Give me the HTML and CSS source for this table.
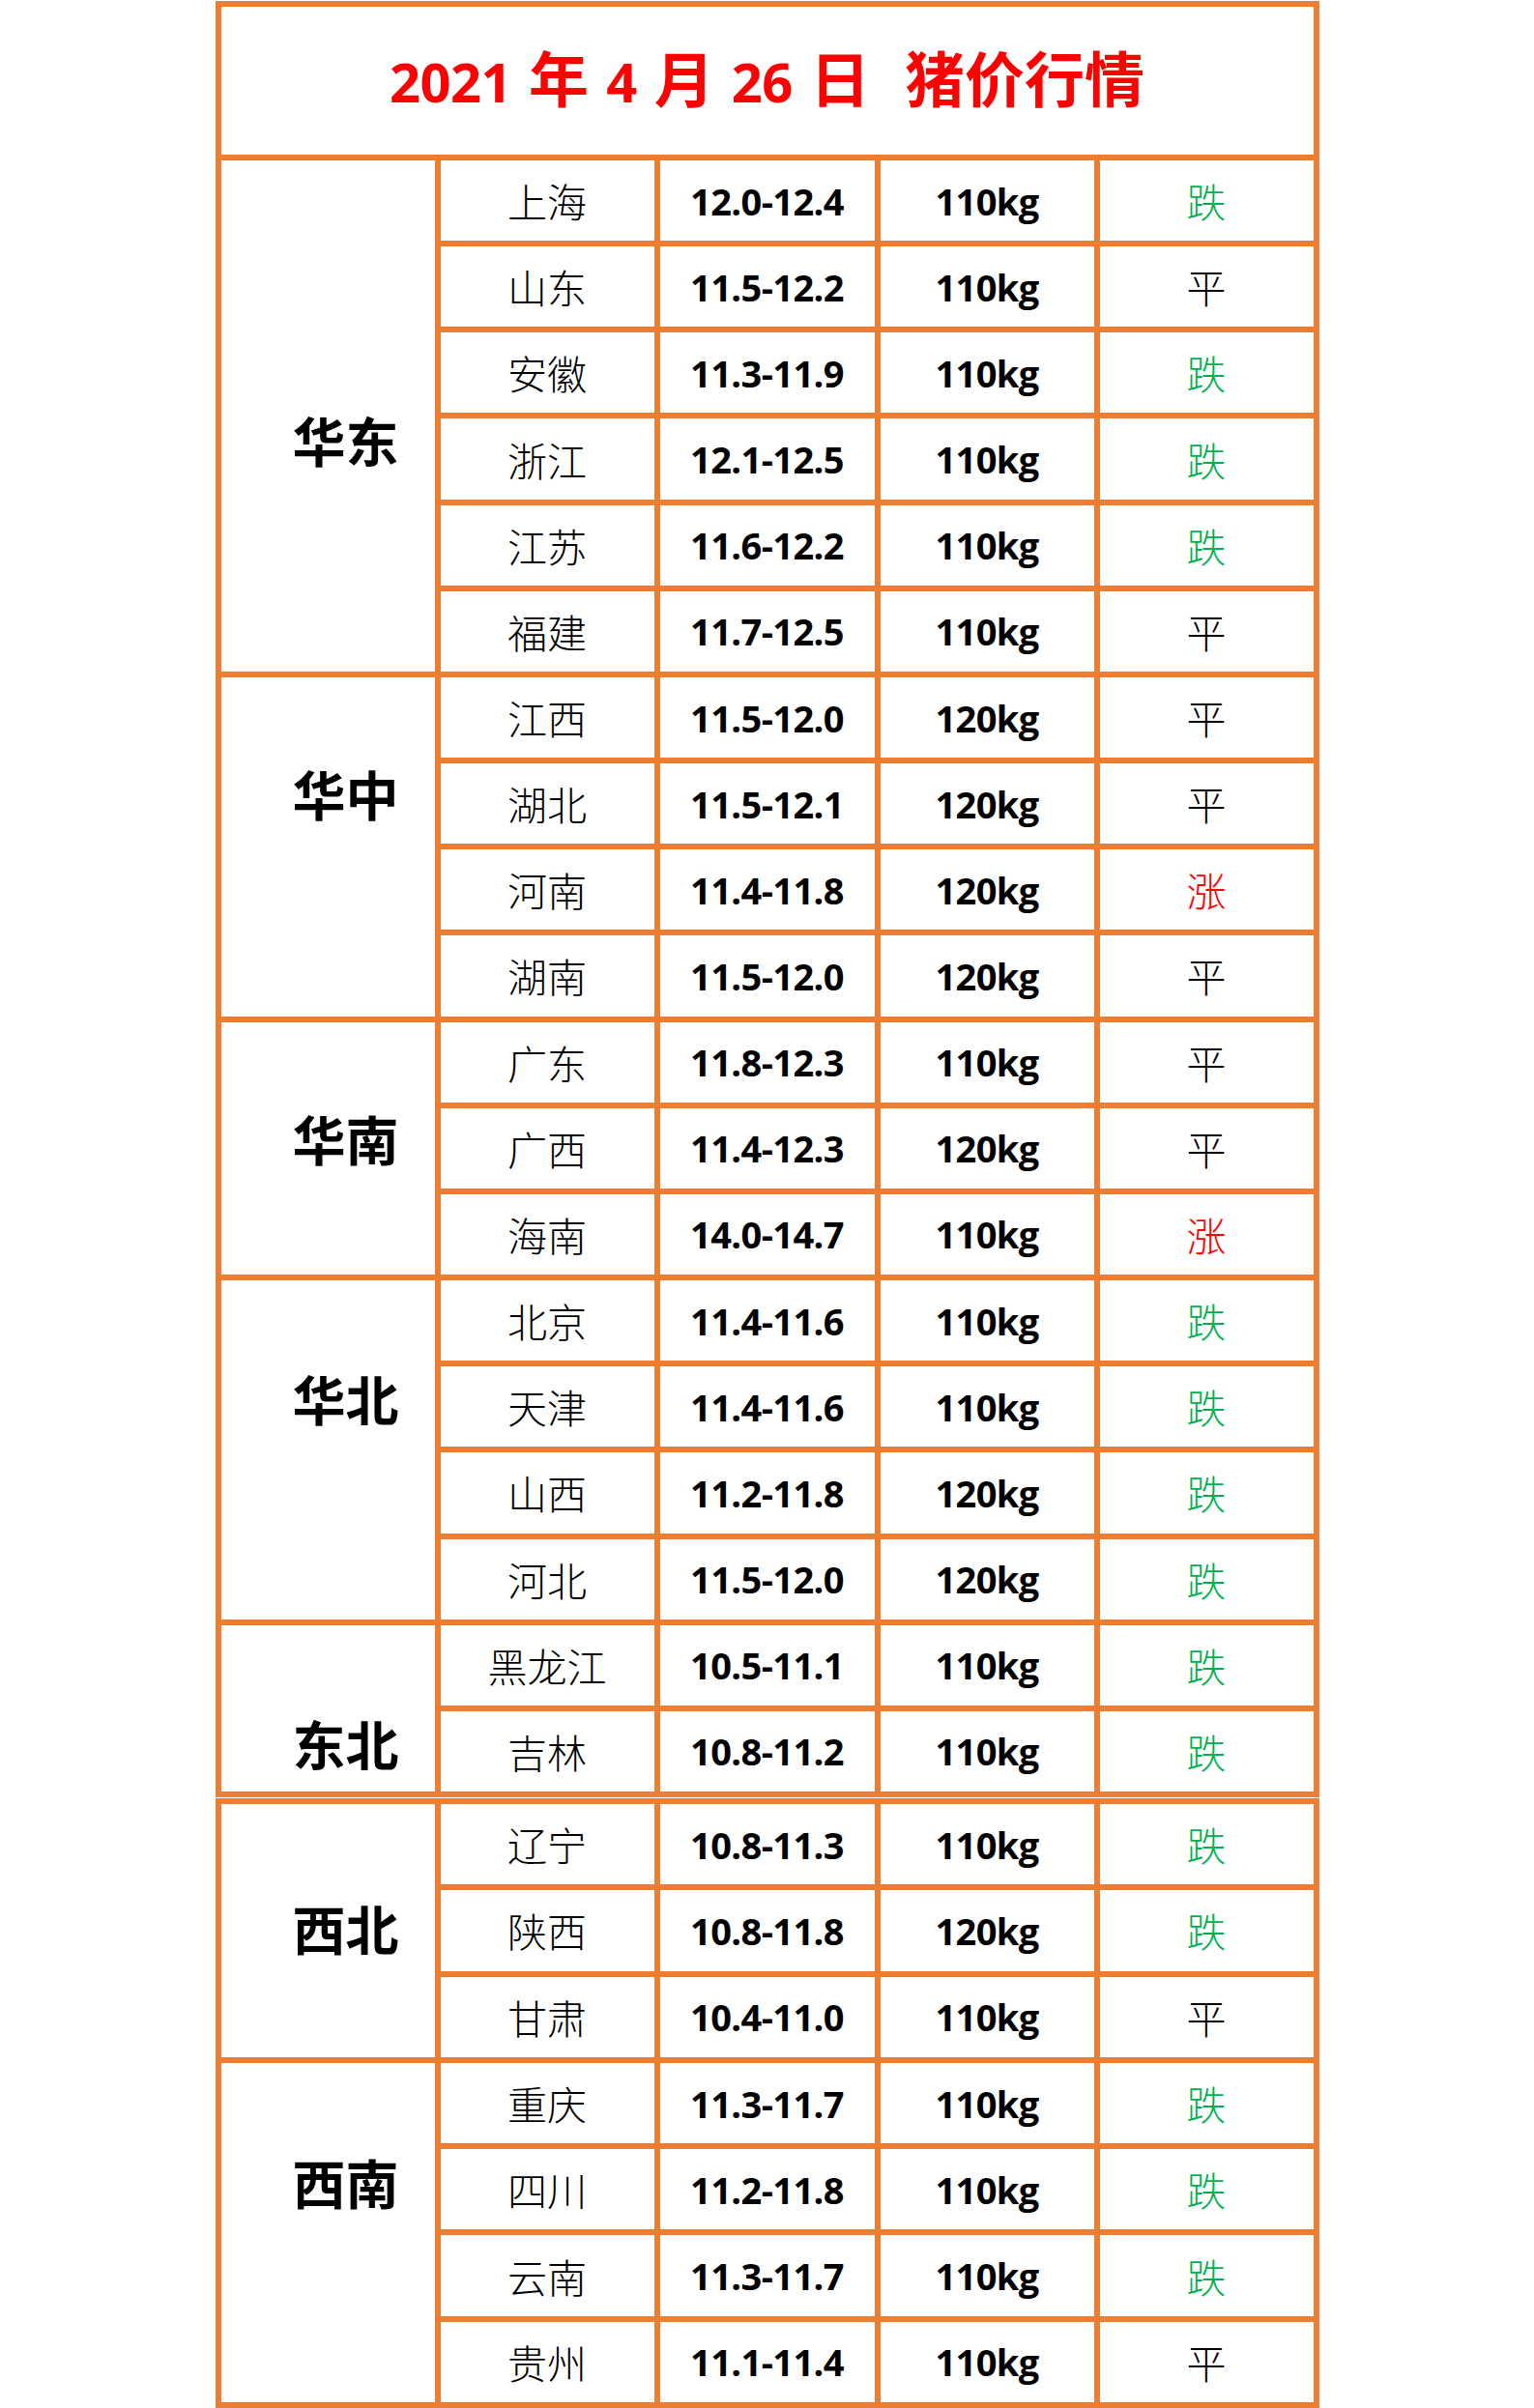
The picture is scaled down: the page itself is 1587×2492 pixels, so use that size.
FILE: index.html
```html
<!DOCTYPE html>
<html lang="zh-CN">
<head>
<meta charset="utf-8">
<title>2021年4月26日 猪价行情</title>
<link rel="stylesheet" href="styles.css">
</head>
<body>
<div class="sheet sheet-top">
  <div class="title"><span class="title-text"><span class="tnum">2021</span> 年 <span class="tnum">4</span> 月 <span class="tnum">26</span> 日&nbsp;&nbsp;猪价行情</span></div>

  <div class="region span-6 off-huadong"><span>华东</span></div>
  <div class="prov">上海</div><div class="price">12.0-12.4</div><div class="weight">110kg</div><div class="trend down">跌</div>
  <div class="prov">山东</div><div class="price">11.5-12.2</div><div class="weight">110kg</div><div class="trend flat">平</div>
  <div class="prov">安徽</div><div class="price">11.3-11.9</div><div class="weight">110kg</div><div class="trend down">跌</div>
  <div class="prov">浙江</div><div class="price">12.1-12.5</div><div class="weight">110kg</div><div class="trend down">跌</div>
  <div class="prov">江苏</div><div class="price">11.6-12.2</div><div class="weight">110kg</div><div class="trend down">跌</div>
  <div class="prov">福建</div><div class="price">11.7-12.5</div><div class="weight">110kg</div><div class="trend flat">平</div>

  <div class="region span-4 off-huazhong"><span>华中</span></div>
  <div class="prov">江西</div><div class="price">11.5-12.0</div><div class="weight">120kg</div><div class="trend flat">平</div>
  <div class="prov">湖北</div><div class="price">11.5-12.1</div><div class="weight">120kg</div><div class="trend flat">平</div>
  <div class="prov">河南</div><div class="price">11.4-11.8</div><div class="weight">120kg</div><div class="trend up">涨</div>
  <div class="prov">湖南</div><div class="price">11.5-12.0</div><div class="weight">120kg</div><div class="trend flat">平</div>

  <div class="region span-3 off-huanan"><span>华南</span></div>
  <div class="prov">广东</div><div class="price">11.8-12.3</div><div class="weight">110kg</div><div class="trend flat">平</div>
  <div class="prov">广西</div><div class="price">11.4-12.3</div><div class="weight">120kg</div><div class="trend flat">平</div>
  <div class="prov">海南</div><div class="price">14.0-14.7</div><div class="weight">110kg</div><div class="trend up">涨</div>

  <div class="region span-4 off-huabei"><span>华北</span></div>
  <div class="prov">北京</div><div class="price">11.4-11.6</div><div class="weight">110kg</div><div class="trend down">跌</div>
  <div class="prov">天津</div><div class="price">11.4-11.6</div><div class="weight">110kg</div><div class="trend down">跌</div>
  <div class="prov">山西</div><div class="price">11.2-11.8</div><div class="weight">120kg</div><div class="trend down">跌</div>
  <div class="prov">河北</div><div class="price">11.5-12.0</div><div class="weight">120kg</div><div class="trend down">跌</div>

  <div class="region span-2 off-dongbei"><span>东北</span></div>
  <div class="prov">黑龙江</div><div class="price">10.5-11.1</div><div class="weight">110kg</div><div class="trend down">跌</div>
  <div class="prov">吉林</div><div class="price">10.8-11.2</div><div class="weight">110kg</div><div class="trend down">跌</div>
</div>

<div class="sheet sheet-bottom">
  <div class="region span-3 off-xibei"><span>西北</span></div>
  <div class="prov">辽宁</div><div class="price">10.8-11.3</div><div class="weight">110kg</div><div class="trend down">跌</div>
  <div class="prov">陕西</div><div class="price">10.8-11.8</div><div class="weight">120kg</div><div class="trend down">跌</div>
  <div class="prov">甘肃</div><div class="price">10.4-11.0</div><div class="weight">110kg</div><div class="trend flat">平</div>

  <div class="region span-4 off-xinan"><span>西南</span></div>
  <div class="prov">重庆</div><div class="price">11.3-11.7</div><div class="weight">110kg</div><div class="trend down">跌</div>
  <div class="prov">四川</div><div class="price">11.2-11.8</div><div class="weight">110kg</div><div class="trend down">跌</div>
  <div class="prov">云南</div><div class="price">11.3-11.7</div><div class="weight">110kg</div><div class="trend down">跌</div>
  <div class="prov">贵州</div><div class="price">11.1-11.4</div><div class="weight">110kg</div><div class="trend flat">平</div>
</div>
</body>
</html>
```

FILE: styles.css
```css
html, body {
  margin: 0;
  padding: 0;
  background: #ffffff;
}

body {
  font-family: "Noto Sans CJK SC", "Noto Sans", sans-serif;
  color: #000000;
}

.sheet {
  width: 1142px;
  box-sizing: border-box;
  margin: 1px auto 0;
  padding: 6px;
  background: #ed7d31;
  display: grid;
  grid-template-columns: 221px 221px 222px 221px 221px;
  column-gap: 6px;
  row-gap: 6px;
}

.sheet-top {
  grid-template-rows: 153px;
  grid-auto-rows: 83.16px;
}

.sheet-bottom {
  grid-auto-rows: 83.3px;
}

.sheet > div {
  background: #ffffff;
  display: flex;
  align-items: center;
  justify-content: center;
  white-space: nowrap;
}

.title {
  grid-column: 1 / -1;
  color: #ff0000;
  font-family: "Noto Sans CJK SC", sans-serif;
  font-weight: 700;
  font-size: 62px;
  line-height: 1;
  padding-bottom: 8px;
  box-sizing: border-box;
}

.title-text {
  white-space: pre;
  word-spacing: 4px;
}

.title .tnum {
  font-family: "Open Sans", "Noto Sans", sans-serif;
  font-weight: 700;
  font-size: 56px;
  letter-spacing: -0.5px;
}

.region {
  grid-column: 1;
  box-sizing: border-box;
  padding-left: 37px;
  font-family: "Noto Sans CJK SC", serif;
  font-weight: 700;
  font-size: 55px;
  line-height: 1;
}

.sheet > .region {
  align-items: flex-start;
}

.span-2 { grid-row: span 2; }
.span-3 { grid-row: span 3; }
.span-4 { grid-row: span 4; }
.span-6 { grid-row: span 6; }

.off-huadong  { padding-top: 261px; }
.off-huazhong { padding-top: 92px; }
.off-huanan   { padding-top: 92px; }
.off-huabei   { padding-top: 94px; }
.off-dongbei  { padding-top: 94px; }
.off-xibei    { padding-top: 100px; }
.off-xinan    { padding-top: 95px; }

.prov {
  grid-column: 2;
  font-family: "Noto Sans CJK SC", serif;
  font-weight: 300;
  font-size: 41px;
  line-height: 1;
}

.price,
.weight {
  font-family: "Open Sans", "Noto Sans", sans-serif;
  font-weight: 700;
  font-size: 38px;
  line-height: 1;
  letter-spacing: -0.6px;
}

.trend {
  font-family: "Noto Sans CJK SC", serif;
  font-weight: 300;
  font-size: 41px;
  line-height: 1;
}

.trend.down { color: #00b050; }
.trend.up   { color: #ff0000; }
.trend.flat { color: #000000; }
```
